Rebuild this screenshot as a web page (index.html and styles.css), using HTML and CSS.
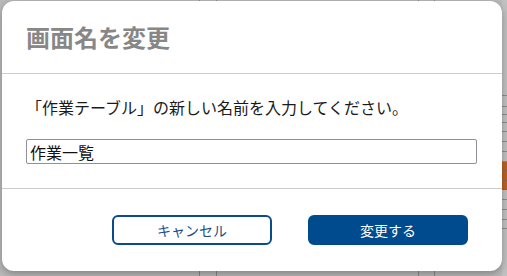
FILE: index.html
```html
<!DOCTYPE html>
<html lang="ja">
<head>
<meta charset="utf-8">
<title>画面名を変更</title>
<link rel="stylesheet" href="styles.css">
</head>
<body>
<div class="page">
  <div class="main">
    <div class="col c1"></div>
    <div class="col c2"></div>
    <div class="col c3"></div>
    <div class="col c4"></div>
    <div class="col c5"></div>
  </div>
  <div class="rcol">
    <div class="r" style="height:96px"></div>
    <div class="r" style="height:11px"></div>
    <div class="r" style="height:8px"></div>
    <div class="r" style="height:8px"></div>
    <div class="r" style="height:9px"></div>
    <div class="r" style="height:10px"></div>
    <div class="r" style="height:10px"></div>
    <div class="r" style="height:10px"></div>
    <div class="r orange" style="height:9px"></div>
    <div class="r orange" style="height:10px"></div>
    <div class="r orange" style="height:9px"></div>
    <div class="r" style="height:10px"></div>
    <div class="r" style="height:10px"></div>
    <div class="r" style="height:10px"></div>
    <div class="r" style="height:9px"></div>
  </div>

  <div class="dialog" role="dialog">
    <div class="dlg-header">
      <h2 class="dlg-title">画面名を変更</h2>
    </div>
    <div class="dlg-body">
      <p class="dlg-text">「作業テーブル」の新しい名前を入力してください。</p>
      <input class="dlg-input" type="text" value="作業一覧">
    </div>
    <div class="dlg-footer">
      <button class="btn btn-cancel">キャンセル</button>
      <button class="btn btn-primary">変更する</button>
    </div>
  </div>
</div>
</body>
</html>
```

FILE: styles.css
```css
* { box-sizing: border-box; }

html, body {
  margin: 0;
  padding: 0;
}

body {
  font-family: "Noto Sans CJK JP", "Noto Sans", sans-serif;
  background: #bdbdbd;
}

.page {
  position: relative;
  width: 507px;
  height: 276px;
  display: flex;
  overflow: hidden;
  background: #bababa;
}

.main {
  flex: 1;
  display: flex;
}

.col {
  height: 100%;
  border-left: 1px solid #8a8a8a;
}
.c1 { width: 199px; border-left: none; }
.c2 { width: 17px; }
.c3 { width: 202px; }
.c4 { width: 16px; }
.c5 { flex: 1; }

.rcol {
  width: 5px;
  display: flex;
  flex-direction: column;
  background: #c2c2c2;
}

.r {
  flex: none;
  border-bottom: 1px solid #8e8e8e;
}

.r.orange {
  background: #c0621e;
  border-bottom-color: #8a6a50;
}

.dialog {
  position: absolute;
  left: 2px;
  top: 1px;
  width: 500px;
  height: 270px;
  background: #ffffff;
  border-radius: 12px;
  box-shadow: 0 3px 8px rgba(0, 0, 0, 0.3);
  display: flex;
  flex-direction: column;
}

.dlg-header {
  height: 73px;
  padding: 0 24px;
  display: flex;
  align-items: center;
  border-bottom: 1px solid #cccccc;
}

.dlg-title {
  margin: 0;
  font-size: 24px;
  font-weight: 700;
  color: #878787;
  line-height: 1;
}

.dlg-body {
  padding: 21px 24px 24px;
  border-bottom: 1px solid #cccccc;
}

.dlg-text {
  margin: 0 0 20px;
  font-size: 16px;
  line-height: 24px;
  color: #1a1a1a;
}

.dlg-input {
  display: block;
  width: 451px;
  height: 25px;
  margin: 0;
  padding: 0 3px;
  border: 1px solid #8f8f9d;
  border-radius: 2px;
  font-family: "Noto Sans CJK JP", sans-serif;
  font-size: 16px;
  color: #111111;
  background: #ffffff;
}

.dlg-footer {
  flex: 1;
  display: flex;
  justify-content: flex-end;
  align-items: flex-start;
  gap: 36px;
  padding: 26px 34px 0 0;
}

.btn {
  width: 160px;
  height: 30px;
  border-radius: 6px;
  font-family: "Noto Sans CJK JP", sans-serif;
  font-size: 14px;
  line-height: 1;
  cursor: pointer;
}

.btn-cancel {
  background: #ffffff;
  border: 2px solid #0a4b8d;
  color: #1d4f87;
}

.btn-primary {
  background: #004a8e;
  border: 2px solid #004a8e;
  color: #ffffff;
}
```
